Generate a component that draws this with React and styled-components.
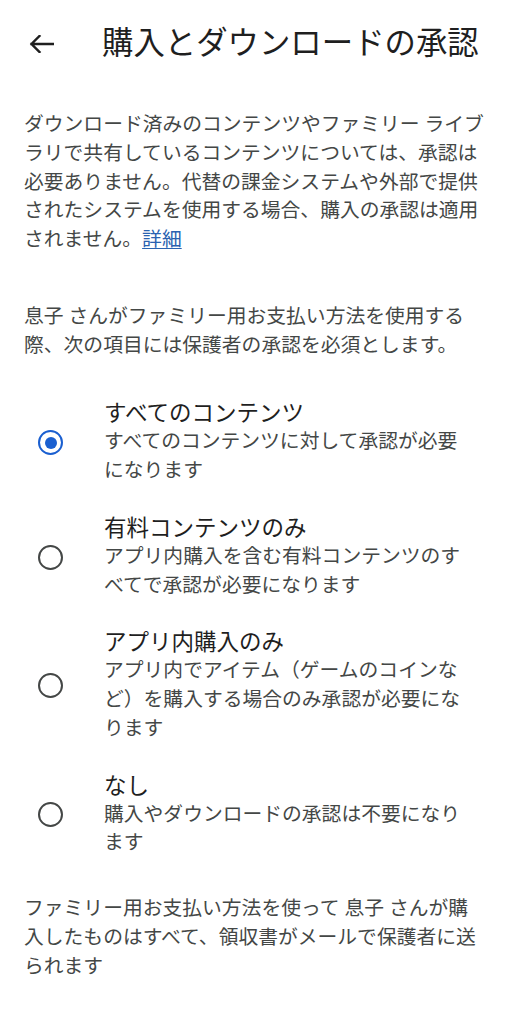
import React from 'react';
import styled, { createGlobalStyle } from 'styled-components';

const GlobalStyle = createGlobalStyle`
  html, body {
    margin: 0;
    padding: 0;
    background: #ffffff;
  }
  body {
    font-family: Roboto, "Noto Sans CJK JP", sans-serif;
    -webkit-font-smoothing: antialiased;
  }
`;

const options = [
  {
    title: 'すべてのコンテンツ',
    description: 'すべてのコンテンツに対して承認が必要になります',
  },
  {
    title: '有料コンテンツのみ',
    description: 'アプリ内購入を含む有料コンテンツのすべてで承認が必要になります',
  },
  {
    title: 'アプリ内購入のみ',
    description: 'アプリ内でアイテム（ゲームのコインなど）を購入する場合のみ承認が必要になります',
  },
  {
    title: 'なし',
    description: '購入やダウンロードの承認は不要になります',
  },
];

const BackArrow = () => (
  <svg width="25" height="18" viewBox="0 0 25 18" fill="none">
    <path
      d="M24 9H2.5M10.5 1L2.5 9l8 8"
      stroke="#1f1f1f"
      strokeWidth="2.4"
      strokeLinecap="square"
    />
  </svg>
);

const App = () => {
  const [selected, setSelected] = React.useState(0);

  return (
    <Page>
      <GlobalStyle />
      <TopBar>
        <BackButton aria-label="戻る">
          <BackArrow />
        </BackButton>
        <Title>購入とダウンロードの承認</Title>
      </TopBar>

      <Body>
        <Paragraph>
          ダウンロード済みのコンテンツやファミリー ライブラリで共有しているコンテンツについては、承認は必要ありません。代替の課金システムや外部で提供されたシステムを使用する場合、購入の承認は適用されません。
          <Link href="#">詳細</Link>
        </Paragraph>

        <Paragraph spaced>
          息子 さんがファミリー用お支払い方法を使用する際、次の項目には保護者の承認を必須とします。
        </Paragraph>

        <OptionList>
          {options.map((opt, i) => (
            <Option key={opt.title} onClick={() => setSelected(i)}>
              <Radio checked={selected === i} />
              <OptionText>
                <OptionTitle>{opt.title}</OptionTitle>
                <OptionDesc>{opt.description}</OptionDesc>
              </OptionText>
            </Option>
          ))}
        </OptionList>

        <Paragraph>
          ファミリー用お支払い方法を使って 息子 さんが購入したものはすべて、領収書がメールで保護者に送られます
        </Paragraph>
      </Body>
    </Page>
  );
};

export default App;

const Page = styled.div`
  width: 514px;
  min-height: 1024px;
  background: #ffffff;
  color: #1f1f1f;
`;

const TopBar = styled.header`
  display: flex;
  align-items: center;
  height: 88px;
  padding-left: 28px;
  box-sizing: border-box;
`;

const BackButton = styled.button`
  display: flex;
  align-items: center;
  justify-content: center;
  padding: 0;
  border: none;
  background: none;
  width: 26px;
  height: 26px;
  cursor: pointer;
`;

const Title = styled.h1`
  margin: 0 0 0 48px;
  font-size: 31.4px;
  font-weight: 400;
  line-height: 40px;
  color: #1f1f1f;
  white-space: nowrap;
`;

const Body = styled.main`
  padding: 23px 27px 40px 24px;
`;

const Paragraph = styled.p`
  margin: ${(p) => (p.spaced ? '48px 0 25px' : '0')};
  font-size: 19.8px;
  line-height: 28.75px;
  color: #444746;
  line-break: strict;
`;

const Link = styled.a`
  color: #2a62b0;
  text-decoration: underline;
  text-underline-offset: 2px;
`;

const OptionList = styled.div`
  display: flex;
  flex-direction: column;
  margin-bottom: 23px;
`;

const Option = styled.div`
  display: flex;
  align-items: center;
  padding: 14px 21px 14px 14px;
  cursor: pointer;
`;

const Radio = styled.span`
  flex: none;
  position: relative;
  width: 25px;
  height: 25px;
  box-sizing: border-box;
  border-radius: 50%;
  border: 2.8px solid ${(p) => (p.checked ? '#1a5fd0' : '#444746')};
  margin-right: 41px;

  &::after {
    content: '';
    position: absolute;
    top: 50%;
    left: 50%;
    width: 12px;
    height: 12px;
    border-radius: 50%;
    background: #1a5fd0;
    transform: translate(-50%, -50%);
    display: ${(p) => (p.checked ? 'block' : 'none')};
  }
`;

const OptionText = styled.div`
  display: flex;
  flex-direction: column;
  min-width: 0;
`;

const OptionTitle = styled.div`
  font-size: 22.5px;
  line-height: 29px;
  color: #1f1f1f;
`;

const OptionDesc = styled.div`
  font-size: 19.8px;
  line-height: 28.75px;
  color: #444746;
  line-break: strict;
`;
